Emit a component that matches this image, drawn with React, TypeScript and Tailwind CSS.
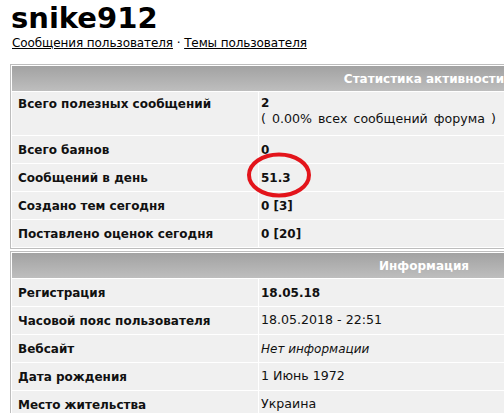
import React from "react";

type Row = { label: string; value: React.ReactNode; tall?: boolean };

const stats: Row[] = [
  {
    label: "Всего полезных сообщений",
    value: (
      <div className="leading-[16px]">
        <div className="text-[12px] font-bold">2</div>
        <div className="[word-spacing:2px]">( 0.00% всех сообщений форума )</div>
      </div>
    ),
    tall: true,
  },
  { label: "Всего баянов", value: <span className="text-[12px] font-bold">0</span> },
  { label: "Сообщений в день", value: <span className="text-[12px] font-bold">51.3</span> },
  { label: "Создано тем сегодня", value: <span className="text-[12px] font-bold">0 [3]</span> },
  { label: "Поставлено оценок сегодня", value: <span className="text-[12px] font-bold">0 [20]</span> },
];

const info: Row[] = [
  { label: "Регистрация", value: <span className="text-[12px] font-bold">18.05.18</span> },
  { label: "Часовой пояс пользователя", value: "18.05.2018 - 22:51" },
  { label: "Вебсайт", value: <span className="text-[12px] italic">Нет информации</span> },
  { label: "Дата рождения", value: "1 Июнь 1972" },
  { label: "Место жительства", value: "Украина" },
];

function Table({ title, rows }: { title: string; rows: Row[] }) {
  return (
    <div className="w-[828px] border border-[#bdbdbd] bg-white p-px">
      <div className="flex h-[25px] items-center justify-center bg-gradient-to-b from-[#a2a2a2] to-[#bebebe] text-[12px] font-bold text-white">
        {title}
      </div>
      {rows.map((r, i) => (
        <div key={i} className={`mt-px flex ${r.tall ? "h-[43px]" : "h-[27px]"}`}>
          <div
            className={`flex w-[246px] bg-[#f0f0f0] pl-[6px] text-[12px] font-bold text-[#111] ${
              r.tall ? "items-start pt-[4px] leading-[16px]" : "items-center"
            }`}
          >
            {r.label}
          </div>
          <div
            className={`ml-px flex flex-1 bg-[#f0f0f0] pl-[2px] text-[12.6px] text-[#111] ${
              r.tall ? "items-start pt-[3px]" : "items-center"
            }`}
          >
            {r.value}
          </div>
        </div>
      ))}
    </div>
  );
}

export default function App() {
  return (
    <div
      className="relative h-[413px] w-[504px] overflow-hidden bg-white text-black"
      style={{ fontFamily: '"DejaVu Sans", Verdana, sans-serif' }}
    >
      <div className="pl-[11px] pt-[1px]">
        <h1 className="text-[29px] font-bold leading-[34px]">snike912</h1>
        <div className="pl-[1px] text-[12px] leading-[16px] tracking-[-0.1px]">
          <a className="underline">Сообщения пользователя</a> · <a className="underline">Темы пользователя</a>
        </div>
      </div>
      <div className="ml-[10px] mt-[13px] flex flex-col gap-[2px]">
        <Table title="Статистика активности" rows={stats} />
        <Table title="Информация" rows={info} />
      </div>
      <svg className="absolute left-[246px] top-[152px]" width="66" height="46" viewBox="0 0 66 46">
        <ellipse cx="33" cy="23" rx="30" ry="20.5" fill="none" stroke="#e3141b" strokeWidth="4" />
      </svg>
    </div>
  );
}
